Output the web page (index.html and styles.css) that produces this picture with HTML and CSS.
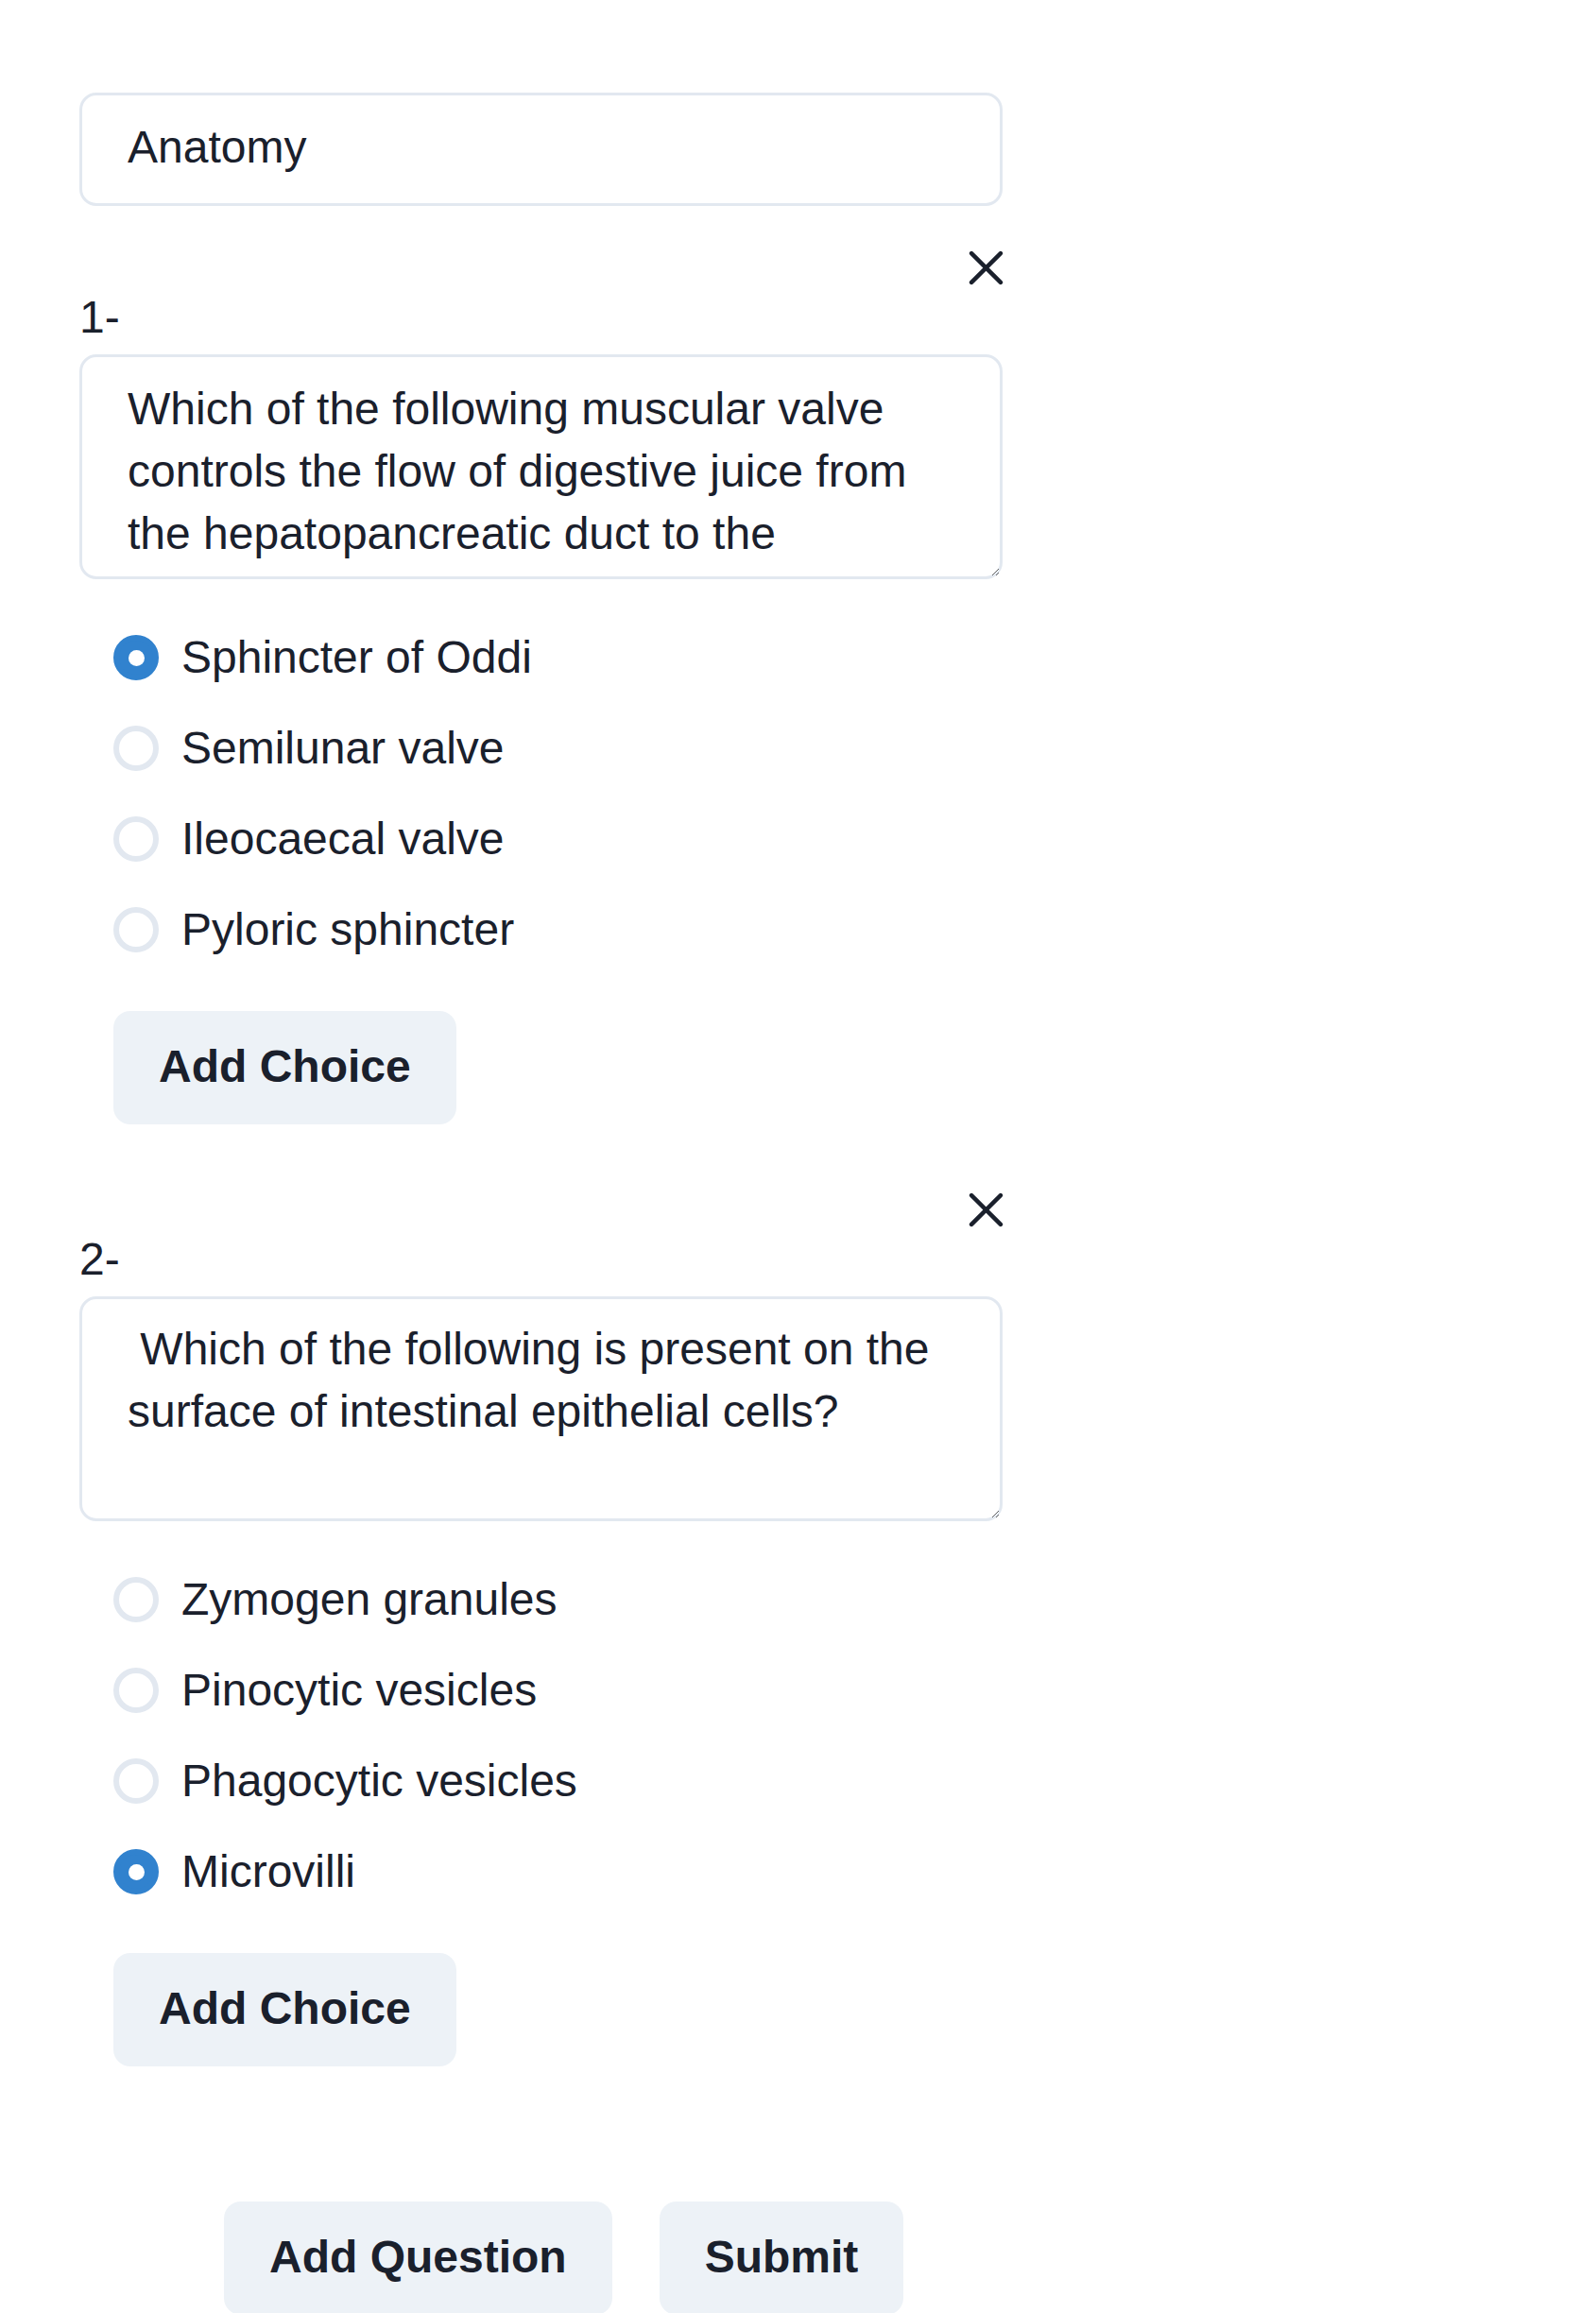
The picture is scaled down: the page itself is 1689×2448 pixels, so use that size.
FILE: index.html
```html
<!DOCTYPE html>
<html lang="en">
<head>
<meta charset="utf-8">
<title>Quiz editor</title>
<link rel="stylesheet" href="styles.css">
</head>
<body>
<div class="page">
  <form class="form">
    <input class="title-input" type="text" value="Anatomy">

    <section class="question">
      <div class="close-row">
        <button type="button" class="close" aria-label="Remove question">
          <svg viewBox="0 0 24 24" width="37" height="37"><path d="M2 2L22 22M22 2L2 22" fill="none" stroke="currentColor" stroke-width="2.9" stroke-linecap="round"/></svg>
        </button>
      </div>
      <div class="q-label">1-</div>
      <textarea class="q-text">Which of the following muscular valve controls the flow of digestive juice from the hepatopancreatic duct to the duodenum?</textarea>
      <div class="choices">
        <label class="choice"><input type="radio" name="q1" checked><span class="dot"></span><span class="choice-text">Sphincter of Oddi</span></label>
        <label class="choice"><input type="radio" name="q1"><span class="dot"></span><span class="choice-text">Semilunar valve</span></label>
        <label class="choice"><input type="radio" name="q1"><span class="dot"></span><span class="choice-text">Ileocaecal valve</span></label>
        <label class="choice"><input type="radio" name="q1"><span class="dot"></span><span class="choice-text">Pyloric sphincter</span></label>
      </div>
      <button type="button" class="btn add-choice">Add Choice</button>
    </section>

    <section class="question second">
      <div class="close-row">
        <button type="button" class="close" aria-label="Remove question">
          <svg viewBox="0 0 24 24" width="37" height="37"><path d="M2 2L22 22M22 2L2 22" fill="none" stroke="currentColor" stroke-width="2.9" stroke-linecap="round"/></svg>
        </button>
      </div>
      <div class="q-label">2-</div>
      <textarea class="q-text second-text"> Which of the following is present on the surface of intestinal epithelial cells?</textarea>
      <div class="choices">
        <label class="choice"><input type="radio" name="q2"><span class="dot"></span><span class="choice-text">Zymogen granules</span></label>
        <label class="choice"><input type="radio" name="q2"><span class="dot"></span><span class="choice-text">Pinocytic vesicles</span></label>
        <label class="choice"><input type="radio" name="q2"><span class="dot"></span><span class="choice-text">Phagocytic vesicles</span></label>
        <label class="choice"><input type="radio" name="q2" checked><span class="dot"></span><span class="choice-text">Microvilli</span></label>
      </div>
      <button type="button" class="btn add-choice">Add Choice</button>
    </section>

    <div class="actions">
      <button type="button" class="btn">Add Question</button>
      <button type="submit" class="btn">Submit</button>
    </div>
  </form>
</div>
</body>
</html>
```
FILE: styles.css
```css
* {
  box-sizing: border-box;
}

html, body {
  margin: 0;
  background: #ffffff;
}

body {
  font-family: "Liberation Sans", Arial, sans-serif;
  color: #1A202C;
  font-size: 48px;
  line-height: 1.5;
}

.page {
  padding: 98px 0 0 84px;
}

.form {
  width: 977px;
  display: flex;
  flex-direction: column;
}

.title-input {
  display: block;
  width: 100%;
  height: 120px;
  margin: 0;
  padding: 0 48px 6px 48px;
  border: 3px solid #E2E8F0;
  border-radius: 18px;
  font-family: inherit;
  font-size: 48px;
  color: #1A202C;
  background: #fff;
  outline: none;
}

.question {
  display: flex;
  flex-direction: column;
  align-items: flex-start;
  margin-top: 47px;
}

.question.second {
  margin-top: 72px;
}

.close-row {
  width: 100%;
  height: 35px;
  display: flex;
  justify-content: flex-end;
}

.close {
  display: block;
  width: 37px;
  height: 37px;
  margin: 0 -1px 0 0;
  padding: 0;
  border: none;
  background: none;
  color: #1A202C;
  cursor: pointer;
}

.close svg {
  display: block;
}

.q-label {
  font-size: 48px;
  line-height: 72px;
  height: 72px;
}

.q-text {
  display: block;
  width: 100%;
  height: 238px;
  margin-top: 3px;
  padding: 22px 48px 24px;
  border: 3px solid #E2E8F0;
  border-radius: 18px;
  font-family: inherit;
  font-size: 48px;
  line-height: 66px;
  color: #1A202C;
  background: #fff;
  overflow: hidden;
  resize: vertical;
  outline: none;
}

.q-text.second-text {
  padding-top: 20px;
}

.choices {
  display: flex;
  flex-direction: column;
  gap: 24px;
  margin-top: 47px;
  padding-left: 36px;
}

.choice {
  display: flex;
  align-items: center;
  height: 72px;
  cursor: pointer;
}

.choice input {
  position: absolute;
  opacity: 0;
  width: 0;
  height: 0;
  margin: 0;
}

.dot {
  width: 48px;
  height: 48px;
  flex: none;
  border: 6px solid #E2E8F0;
  border-radius: 50%;
  background: #fff;
  display: flex;
  align-items: center;
  justify-content: center;
}

.choice input:checked + .dot {
  background: #3182CE;
  border-color: #3182CE;
}

.choice input:checked + .dot::before {
  content: "";
  width: 17px;
  height: 17px;
  border-radius: 50%;
  background: #fff;
}

.choice-text {
  margin-left: 24px;
  font-size: 48px;
  line-height: 72px;
}

.btn {
  height: 120px;
  padding: 0 48px 3px;
  border: none;
  border-radius: 18px;
  background: #EDF2F7;
  color: #1A202C;
  font-family: inherit;
  font-size: 48px;
  font-weight: 700;
  line-height: 1.2;
  cursor: pointer;
  white-space: nowrap;
}

.add-choice {
  margin-top: 50px;
  margin-left: 36px;
}

.actions {
  display: flex;
  gap: 50px;
  margin-top: 143px;
  padding-left: 153px;
}
```
